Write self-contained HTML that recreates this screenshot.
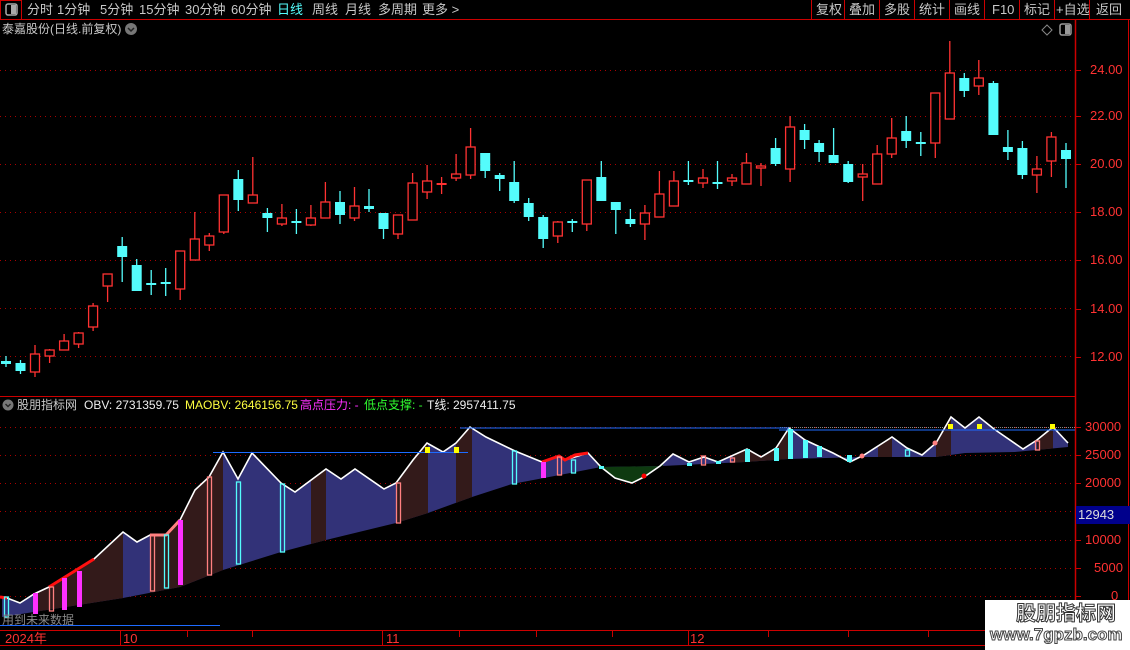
<!DOCTYPE html>
<html><head><meta charset="utf-8"><style>
*{margin:0;padding:0;box-sizing:border-box}
body{width:1130px;height:650px;background:#000;overflow:hidden;position:relative;font-family:"Liberation Sans","Noto Sans CJK SC",sans-serif;color:#c8c8c8}
.t{position:absolute;white-space:nowrap;font-size:13px;line-height:15px}
.s{font-size:12px}
.ax{position:absolute;color:#ff3232;font-size:13px;line-height:14px}
</style></head><body>
<svg width="1130" height="650" style="position:absolute;left:0;top:0">
<rect x="0.5" y="0.5" width="21" height="19" fill="none" stroke="#c00" />
<rect x="6" y="4" width="11" height="11" rx="2" fill="none" stroke="#aaa" stroke-width="1.5"/><rect x="11" y="5" width="5" height="9" fill="#aaa"/>
<line x1="0" y1="19.5" x2="1130" y2="19.5" stroke="#c00"/>
<g stroke="#c00"><line x1="811.5" y1="0" x2="811.5" y2="19"/><line x1="844.5" y1="0" x2="844.5" y2="19"/><line x1="879.5" y1="0" x2="879.5" y2="19"/><line x1="914.5" y1="0" x2="914.5" y2="19"/><line x1="949.5" y1="0" x2="949.5" y2="19"/><line x1="984.5" y1="0" x2="984.5" y2="19"/><line x1="1019.5" y1="0" x2="1019.5" y2="19"/><line x1="1054.5" y1="0" x2="1054.5" y2="19"/><line x1="1089.5" y1="0" x2="1089.5" y2="19"/></g>
<circle cx="131" cy="29" r="6" fill="#777"/><path d="M128 28l3 3 3-3" stroke="#222" stroke-width="1.5" fill="none"/>
<path d="M1047 25l5 5-5 5-5-5z" fill="none" stroke="#888"/>
<rect x="1060" y="24" width="11" height="11" rx="2" fill="none" stroke="#999" stroke-width="1.5"/><rect x="1065" y="25" width="5" height="9" fill="#999"/>
<line x1="1075.5" y1="20" x2="1075.5" y2="630" stroke="#c00" stroke-width="1.5"/>
<line x1="1128.5" y1="20" x2="1128.5" y2="630" stroke="#c00"/>
<line x1="0" y1="396.5" x2="1075" y2="396.5" stroke="#c00"/>
<line x1="0" y1="630.5" x2="1130" y2="630.5" stroke="#c00"/>
<line x1="0" y1="645.5" x2="985" y2="645.5" stroke="#c00"/>
<g stroke="#c00"><line x1="120.5" y1="630" x2="120.5" y2="645"/><line x1="187.5" y1="630" x2="187.5" y2="637"/><line x1="252.5" y1="630" x2="252.5" y2="637"/><line x1="382.5" y1="630" x2="382.5" y2="645"/><line x1="459.5" y1="630" x2="459.5" y2="637"/><line x1="536.5" y1="630" x2="536.5" y2="637"/><line x1="612.5" y1="630" x2="612.5" y2="637"/><line x1="688.5" y1="630" x2="688.5" y2="645"/><line x1="768.5" y1="630" x2="768.5" y2="637"/><line x1="848.5" y1="630" x2="848.5" y2="637"/><line x1="928.5" y1="630" x2="928.5" y2="637"/></g>
<g stroke="#c00"><line x1="1075" y1="70.5" x2="1081" y2="70.5"/><line x1="1075" y1="116.5" x2="1081" y2="116.5"/><line x1="1075" y1="164.5" x2="1081" y2="164.5"/><line x1="1075" y1="212.5" x2="1081" y2="212.5"/><line x1="1075" y1="260.5" x2="1081" y2="260.5"/><line x1="1075" y1="309.5" x2="1081" y2="309.5"/><line x1="1075" y1="357.5" x2="1081" y2="357.5"/>
<line x1="1075" y1="427.5" x2="1081" y2="427.5"/><line x1="1075" y1="455.5" x2="1081" y2="455.5"/><line x1="1075" y1="483.5" x2="1081" y2="483.5"/><line x1="1075" y1="540.5" x2="1081" y2="540.5"/><line x1="1075" y1="568.5" x2="1081" y2="568.5"/><line x1="1075" y1="596.5" x2="1081" y2="596.5"/></g>
<g stroke="#a00" stroke-dasharray="1 4">
<line x1="0" y1="70.5" x2="1075" y2="70.5"/><line x1="0" y1="116.5" x2="1075" y2="116.5"/><line x1="0" y1="164.5" x2="1075" y2="164.5"/><line x1="0" y1="212.5" x2="1075" y2="212.5"/><line x1="0" y1="260.5" x2="1075" y2="260.5"/><line x1="0" y1="308.5" x2="1075" y2="308.5"/><line x1="0" y1="356.5" x2="1075" y2="356.5"/>
<line x1="0" y1="427.5" x2="1075" y2="427.5"/><line x1="0" y1="455.5" x2="1075" y2="455.5"/><line x1="0" y1="483.5" x2="1075" y2="483.5"/><line x1="0" y1="511.5" x2="1075" y2="511.5"/><line x1="0" y1="540.5" x2="1075" y2="540.5"/><line x1="0" y1="568.5" x2="1075" y2="568.5"/><line x1="0" y1="596.5" x2="1075" y2="596.5"/>
</g>
<line x1="780" y1="427.5" x2="1075" y2="427.5" stroke="#888" stroke-dasharray="1 1"/>
<path stroke="#ff3232" stroke-width="1.3" fill="none" d="M35 345V377M49.6 349V363M64.1 334V350M78.6 332V348M93.1 303V331M107.6 274V302M180.2 251V300M194.8 212V260M209.3 233V251M223.8 195V234M252.8 157V203M281.9 204V226M310.9 205V226M325.4 182V218M354.5 187V221M398 215V239M412.6 173V220M427.1 165V199M441.6 177V194M456.1 154V181M470.6 128V179M557.8 221V243M586.8 180V231M644.9 205V240M659.4 171V217M673.9 171V206M703 169V188M732 174V186M746.5 153V184M761 163V186M790.1 116V182M862.7 164V201M877.2 145V184M891.7 118V158M935.3 93V158M949.8 41V119M978.8 60V95M1036.9 156V193M1051.4 132V177"/>
<path stroke="#54fcfc" stroke-width="1.3" fill="none" d="M6 356V367M20.5 360V374M122.2 237V282M136.7 259V291M151.2 270V295M165.7 268V296M238.3 170V211M267.4 208V232M296.4 209V234M340 191V224M369 189V212M383.5 213V239M485.2 153V178M499.7 173V191M514.2 161V203M528.7 198V221M543.2 215V248M572.3 219V232M601.3 161V201M615.8 202V234M630.4 209V227M688.4 161V185M717.5 161V189M775.6 138V166M804.6 124V149M819.1 140V162M833.6 128V163M848.2 161V183M906.2 116V148M920.8 132V156M964.3 73V97M993.4 81V135M1007.9 130V160M1022.4 141V179M1066 143V188"/>
<g fill="#000" stroke="#ff3232" stroke-width="1.3">
<rect x="30.5" y="354" width="9" height="18"/><rect x="45.1" y="350" width="9" height="6"/><rect x="59.6" y="341" width="9" height="9"/><rect x="74.1" y="333" width="9" height="11"/><rect x="88.6" y="306" width="9" height="21"/><rect x="103.1" y="274" width="9" height="12"/><rect x="175.7" y="251" width="9" height="38"/><rect x="190.3" y="239" width="9" height="21"/><rect x="204.8" y="236" width="9" height="9"/><rect x="219.3" y="195" width="9" height="37"/><rect x="248.3" y="195" width="9" height="8"/><rect x="277.4" y="218" width="9" height="6"/><rect x="306.4" y="218" width="9" height="7"/><rect x="320.9" y="202" width="9" height="16"/><rect x="350" y="206" width="9" height="12"/><rect x="393.5" y="215" width="9" height="19"/><rect x="408.1" y="183" width="9" height="37"/><rect x="422.6" y="181" width="9" height="11"/><rect x="451.6" y="174" width="9" height="4"/><rect x="466.1" y="147" width="9" height="28"/><rect x="553.3" y="222" width="9" height="14"/><rect x="582.3" y="180" width="9" height="44"/><rect x="640.4" y="213" width="9" height="11"/><rect x="654.9" y="194" width="9" height="23"/><rect x="669.4" y="181" width="9" height="25"/><rect x="698.5" y="178" width="9" height="5"/><rect x="727.5" y="178" width="9" height="3"/><rect x="742" y="163" width="9" height="21"/><rect x="756.5" y="166" width="9" height="2"/><rect x="785.6" y="127" width="9" height="42"/><rect x="858.2" y="174" width="9" height="3"/><rect x="872.7" y="154" width="9" height="30"/><rect x="887.2" y="138" width="9" height="16"/><rect x="930.8" y="93" width="9" height="50"/><rect x="945.3" y="73" width="9" height="46"/><rect x="974.3" y="78" width="9" height="8"/><rect x="1032.4" y="169" width="9" height="6"/><rect x="1046.9" y="137" width="9" height="24"/>
</g>
<rect x="436.6" y="183" width="10" height="2" fill="#ff3232"/>
<g fill="#54fcfc">
<rect x="1" y="361" width="10" height="3"/><rect x="15.5" y="363" width="10" height="8"/><rect x="117.2" y="246" width="10" height="11"/><rect x="131.7" y="265" width="10" height="26"/><rect x="146.2" y="283" width="10" height="2"/><rect x="160.7" y="282" width="10" height="2"/><rect x="233.3" y="179" width="10" height="21"/><rect x="262.4" y="213" width="10" height="5"/><rect x="291.4" y="221" width="10" height="2"/><rect x="335" y="202" width="10" height="13"/><rect x="364" y="206" width="10" height="3"/><rect x="378.5" y="213" width="10" height="16"/><rect x="480.2" y="153" width="10" height="18"/><rect x="494.7" y="175" width="10" height="4"/><rect x="509.2" y="182" width="10" height="19"/><rect x="523.7" y="203" width="10" height="14"/><rect x="538.2" y="217" width="10" height="22"/><rect x="567.3" y="221" width="10" height="2"/><rect x="596.3" y="177" width="10" height="24"/><rect x="610.8" y="202" width="10" height="8"/><rect x="625.4" y="219" width="10" height="5"/><rect x="683.4" y="180" width="10" height="2"/><rect x="712.5" y="182" width="10" height="2"/><rect x="770.6" y="148" width="10" height="16"/><rect x="799.6" y="130" width="10" height="10"/><rect x="814.1" y="143" width="10" height="9"/><rect x="828.6" y="155" width="10" height="8"/><rect x="843.2" y="164" width="10" height="18"/><rect x="901.2" y="131" width="10" height="10"/><rect x="915.8" y="142" width="10" height="2"/><rect x="959.3" y="78" width="10" height="13"/><rect x="988.4" y="83" width="10" height="52"/><rect x="1002.9" y="147" width="10" height="5"/><rect x="1017.4" y="148" width="10" height="27"/><rect x="1061" y="150" width="10" height="9"/>
</g>
<defs><clipPath id="cp"><polygon points="2,597 7,598 20,603 34,594 49,587 94,559 123,532 137,542 150,535 166,535 180,520 195,490 209,477 223,452 238,479 252,453 281,483 295,492 326,469 341,479 355,469 384,489 396,483 413,460 427,443 443,452 456,443 470,427 486,437 515,451 542,462 559,456 565,460 588,453 601,467 615,478 632,483 644,477 660,466 673,454 689,462 704,457 718,462 747,449 761,457 776,448 789,428 805,440 833,453 850,462 864,455 892,437 907,448 922,455 936,443 951,417 965,428 979,417 994,429 1023,449 1037,440 1053,427 1068,443 1068,447 1015,452 965,453 936,457 864,457 788,459 745,462 662,466 601,467 565,474 512,484 472,497 428,513 396,523 326,540 281,552 223,570 180,587 123,598 2,617"/></clipPath></defs>
<g clip-path="url(#cp)">
<rect x="0" y="400" width="1075" height="230" fill="#323278"/>
<g fill="#331a1a"><rect x="34" y="400" width="89" height="230"/><rect x="150" y="400" width="73" height="230"/><rect x="311" y="400" width="15" height="230"/><rect x="396" y="400" width="32" height="230"/><rect x="456" y="400" width="16" height="230"/><rect x="733" y="400" width="55" height="230"/><rect x="878" y="400" width="14" height="230"/><rect x="936" y="400" width="15" height="230"/><rect x="1037" y="400" width="16" height="230"/></g>
<rect x="598" y="400" width="65" height="230" fill="#0e3a10"/>
<rect x="745" y="400" width="16" height="30" fill="#331a1a"/>
</g>
<polyline fill="none" stroke="#fff" stroke-width="1.6" points="2,597 7,598 20,603 34,594 49,587 94,559 123,532 137,542 150,535 166,535 180,520 195,490 209,477 223,452 238,479 252,453 281,483 295,492 326,469 341,479 355,469 384,489 396,483 413,460 427,443 443,452 456,443 470,427 486,437 515,451 542,462 559,456 565,460 588,453 601,467 615,478 632,483 644,477 660,466 673,454 689,462 704,457 718,462 747,449 761,457 776,448 789,428 805,440 833,453 850,462 864,455 892,437 907,448 922,455 936,443 951,417 965,428 979,417 994,429 1023,449 1037,440 1053,427 1068,443"/>
<g fill="none" stroke-width="3"><polyline stroke="#ff1010" points="49,587 94,559"/><polyline stroke="#ff8080" points="150,535 166,535 180,520"/><polyline stroke="#ff1010" points="542,462 559,456 565,460 575,455 588,453"/><polyline stroke="#ff1010" points="0,597 7,598"/></g>
<line x1="213" y1="452.5" x2="468" y2="452.5" stroke="#1e6bff"/>
<line x1="460" y1="428" x2="789" y2="428" stroke="#1e6bff"/>
<line x1="779" y1="430" x2="1075" y2="430" stroke="#1e6bff"/>
<line x1="0" y1="625.5" x2="220" y2="625.5" stroke="#1e6bff"/>
<g fill="none" stroke-width="1.3"><g stroke="#54fcfc"><rect x="4.5" y="597" width="4" height="20"/><rect x="164.5" y="535" width="4" height="53"/><rect x="236.5" y="482" width="4" height="82"/><rect x="280.5" y="484" width="4" height="68"/><rect x="512.5" y="451" width="4" height="33"/><rect x="571.5" y="460" width="4" height="13"/><rect x="905.5" y="450" width="4" height="6"/></g>
<g stroke="#ff8080"><rect x="49.5" y="587" width="4" height="24"/><rect x="150.5" y="535" width="4" height="56"/><rect x="207.5" y="477" width="4" height="98"/><rect x="396.5" y="483" width="4" height="40"/><rect x="557.5" y="457" width="4" height="18"/><rect x="701.5" y="456" width="4" height="9"/><rect x="730.5" y="458" width="4" height="4"/><rect x="1035.5" y="441" width="4" height="9"/></g></g>
<g fill="#ff30ff"><rect x="33" y="593" width="5" height="21"/><rect x="62" y="578" width="5" height="32"/><rect x="77" y="571" width="5" height="36"/><rect x="178" y="520" width="5" height="65"/><rect x="541" y="462" width="5" height="16"/></g>
<g fill="#54fcfc"><rect x="745" y="449" width="5" height="13"/><rect x="774" y="448" width="5" height="13"/><rect x="788" y="429" width="5" height="30"/><rect x="803" y="440" width="5" height="18"/><rect x="817" y="446" width="5" height="11"/><rect x="847" y="455" width="5" height="7"/><rect x="599" y="466" width="5" height="3"/><rect x="687" y="463" width="5" height="3"/><rect x="716" y="461" width="5" height="3"/></g>
<g fill="#ff8080"><circle cx="862" cy="456" r="2.5"/><circle cx="935" cy="443" r="2.5"/></g><circle cx="644" cy="476" r="2.5" fill="#f00"/>
<g fill="#ffff00"><rect x="425" y="447" width="5" height="6"/><rect x="454" y="447" width="5" height="6"/><rect x="948" y="424" width="5" height="5"/><rect x="977" y="424" width="5" height="5"/><rect x="1050" y="424" width="5" height="5"/></g>
<circle cx="8" cy="405" r="5.5" fill="#777"/><path d="M5.5 404l2.5 2.5 2.5-2.5" stroke="#222" stroke-width="1.4" fill="none"/>
<rect x="1076" y="506" width="54" height="18" fill="#00008c"/>
<rect x="985" y="600" width="145" height="50" fill="#fff"/>
</svg>
<div class="t" style="left:27px;top:2px">分时</div>
<div class="t" style="left:57px;top:2px">1分钟</div>
<div class="t" style="left:100px;top:2px">5分钟</div>
<div class="t" style="left:139px;top:2px">15分钟</div>
<div class="t" style="left:185px;top:2px">30分钟</div>
<div class="t" style="left:231px;top:2px">60分钟</div>
<div class="t" style="left:277px;top:2px;color:#54fcfc">日线</div>
<div class="t" style="left:312px;top:2px">周线</div>
<div class="t" style="left:345px;top:2px">月线</div>
<div class="t" style="left:378px;top:2px">多周期</div>
<div class="t" style="left:422px;top:2px">更多 &gt;</div>
<div class="t" style="left:816px;top:2px">复权</div>
<div class="t" style="left:849px;top:2px">叠加</div>
<div class="t" style="left:884px;top:2px">多股</div>
<div class="t" style="left:919px;top:2px">统计</div>
<div class="t" style="left:954px;top:2px">画线</div>
<div class="t" style="left:992px;top:2px">F10</div>
<div class="t" style="left:1024px;top:2px">标记</div>
<div class="t" style="left:1056px;top:2px">+自选</div>
<div class="t" style="left:1096px;top:2px">返回</div>
<div class="t" style="left:2px;top:22px;font-size:12px">泰嘉股份(日线.前复权)</div>
<div class="ax" style="left:1090px;top:63px">24.00</div>
<div class="ax" style="left:1090px;top:109px">22.00</div>
<div class="ax" style="left:1090px;top:157px">20.00</div>
<div class="ax" style="left:1090px;top:205px">18.00</div>
<div class="ax" style="left:1090px;top:253px">16.00</div>
<div class="ax" style="left:1090px;top:302px">14.00</div>
<div class="ax" style="left:1090px;top:350px">12.00</div>
<div class="ax" style="left:1085px;top:420px">30000</div>
<div class="ax" style="left:1085px;top:448px">25000</div>
<div class="ax" style="left:1085px;top:476px">20000</div>
<div class="ax" style="left:1078px;top:508px;color:#ddd">12943</div>
<div class="ax" style="left:1085px;top:533px">10000</div>
<div class="ax" style="left:1094px;top:561px">5000</div>
<div class="ax" style="left:1111px;top:589px">0</div>
<div class="t s" style="left:17px;top:398px">股朋指标网</div>
<div class="t s" style="left:84px;top:398px;color:#eee">OBV: 2731359.75</div>
<div class="t s" style="left:185px;top:398px;color:#ffff40">MAOBV: 2646156.75</div>
<div class="t s" style="left:300px;top:398px;color:#ff30ff">高点压力: -</div>
<div class="t s" style="left:364px;top:398px;color:#30ff30">低点支撑: -</div>
<div class="t s" style="left:427px;top:398px;color:#eee">T线: 2957411.75</div>
<div class="t s" style="left:2px;top:613px;color:#888">用到未来数据</div>
<div class="ax" style="left:5px;top:632px">2024年</div>
<div class="ax" style="left:123px;top:632px">10</div>
<div class="ax" style="left:386px;top:632px">11</div>
<div class="ax" style="left:690px;top:632px">12</div>
<div class="t" style="left:1016px;top:602px;font-size:20px;line-height:24px;font-weight:bold;color:#fff;-webkit-text-stroke:1px #333">股朋指标网</div>
<div class="t" style="left:990px;top:625px;font-size:17px;line-height:20px;font-weight:bold;color:#fff;-webkit-text-stroke:1px #444">www.7gpzb.com</div>
</body></html>
